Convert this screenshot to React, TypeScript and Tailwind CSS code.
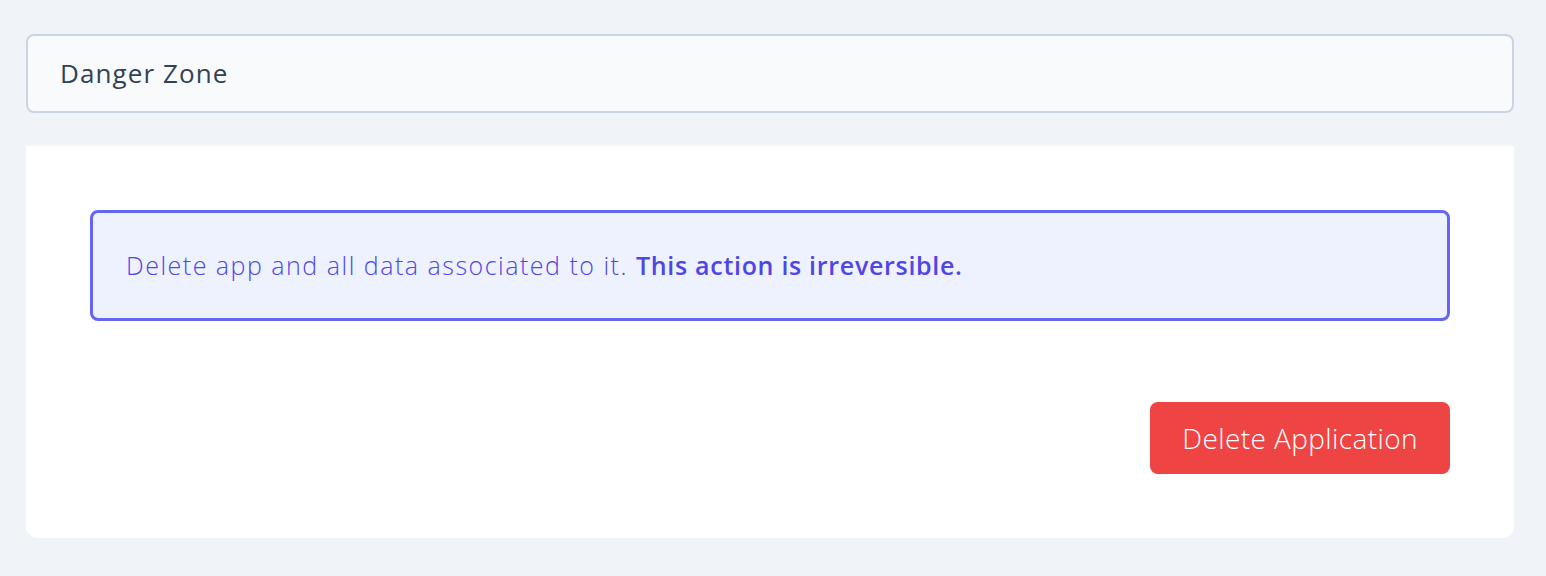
export default function App() {
  return (
    <div
      className="min-h-screen bg-[#f0f4f8] pl-[26px] pr-[32px] pt-[34px] pb-[38px]"
      style={{ fontFamily: '"Open Sans", Lato, sans-serif' }}
    >
      {/* Section header */}
      <div className="rounded-lg border-2 border-[#cbd5e1] bg-[#f8fafc] px-[32px] h-[79px] flex items-center">
        <h2 className="text-[26px] tracking-[1.1px] text-[#334155]">Danger Zone</h2>
      </div>

      {/* Card */}
      <div className="mt-[33px] bg-white rounded-b-xl p-[64px]">
        <div className="rounded-lg border-[3px] border-[#6366f1] bg-[#eef2ff] px-[33px] h-[111px] flex items-center">
          <p className="text-[25px] tracking-[1.5px] text-[#4f46e5] font-light">
            Delete app and all data associated to it.{' '}
            <span className="font-semibold tracking-[0.7px]">This action is irreversible.</span>
          </p>
        </div>

        <div className="mt-[81px] flex justify-end">
          <button className="h-[72px] px-[32px] rounded-lg bg-[#ef4444] text-white text-[28px] tracking-[0.4px] font-light">
            Delete Application
          </button>
        </div>
      </div>
    </div>
  );
}
